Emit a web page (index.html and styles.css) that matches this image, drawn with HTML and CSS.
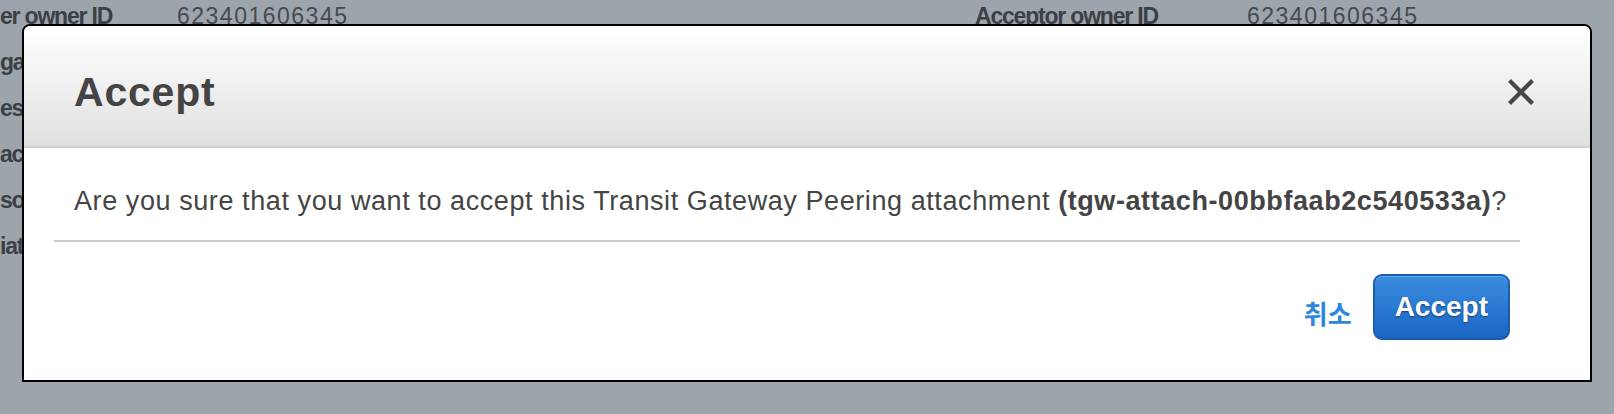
FILE: index.html
```html
<!DOCTYPE html>
<html lang="en">
<head>
<meta charset="utf-8">
<title>Accept</title>
<link rel="stylesheet" href="styles.css">
</head>
<body>
<div class="details">
  <div class="col col-left">
    <div class="row"><span class="label">er owner ID</span><span class="value">623401606345</span></div>
    <div class="row"><span class="label">gateway ID</span></div>
    <div class="row"><span class="label">est</span></div>
    <div class="row"><span class="label">ac</span></div>
    <div class="row"><span class="label">so</span></div>
    <div class="row"><span class="label">iat</span></div>
  </div>
  <div class="col col-right">
    <div class="row"><span class="label label-right">Acceptor owner ID</span><span class="value">623401606345</span></div>
  </div>
</div>

<div class="overlay">
  <div class="modal" role="dialog" aria-labelledby="modal-title">
    <div class="modal-header">
      <h2 class="modal-title" id="modal-title">Accept</h2>
      <button class="close-btn" type="button" aria-label="Close">
        <svg width="28" height="28" viewBox="0 0 28 28" aria-hidden="true">
          <path d="M2.5 2.5 L25.5 25.5 M25.5 2.5 L2.5 25.5" stroke="#474747" stroke-width="4.2" stroke-linecap="butt" fill="none"/>
        </svg>
      </button>
    </div>
    <div class="modal-body">
      <p class="message">Are you sure that you want to accept this Transit Gateway Peering attachment <strong>(tgw-attach-00bbfaab2c540533a)</strong>?</p>
    </div>
    <div class="modal-footer">
      <a class="cancel-link" href="#">취소</a>
      <button class="primary-btn" type="button">Accept</button>
    </div>
  </div>
</div>
</body>
</html>
```

FILE: styles.css
```css
* {
  box-sizing: border-box;
}

html, body {
  margin: 0;
  padding: 0;
}

body {
  width: 1614px;
  height: 414px;
  overflow: hidden;
  background: #9ea4ab;
  font-family: "Liberation Sans", Arial, "Noto Sans CJK KR", sans-serif;
}

/* background details panel (dimmed) */
.details {
  display: flex;
  margin-top: -7px;
}

.col {
  display: flex;
  flex-direction: column;
}

.col-left {
  width: 975px;
}

.row {
  display: flex;
  height: 46px;
  line-height: 46px;
  font-size: 23px;
  white-space: nowrap;
}

.label {
  font-weight: 700;
  color: #3b4047;
  letter-spacing: -1.2px;
  width: 177px;
}

.label-right {
  width: 272px;
}

.value {
  color: #454a51;
  letter-spacing: 1.5px;
}

/* overlay & modal */
.overlay {
  position: fixed;
  inset: 0;
}

.modal {
  position: absolute;
  left: 22px;
  top: 24px;
  width: 1570px;
  background: #fff;
  border: 2px solid #000;
  border-radius: 8px 8px 0 0;
  overflow: hidden;
}

.modal-header {
  height: 122px;
  padding: 11px 55px 0 50px;
  display: flex;
  align-items: center;
  justify-content: space-between;
  background: linear-gradient(#ffffff, #e0e0e0);
  border-bottom: 2px solid #cfcfcf;
}

.modal-title {
  margin: 0;
  font-size: 41px;
  line-height: 40px;
  font-weight: 700;
  letter-spacing: 0.8px;
  color: #444;
}

.close-btn {
  display: flex;
  padding: 0;
  border: 0;
  background: none;
  cursor: pointer;
}

.modal-body {
  margin: 0 70px 0 30px;
  padding: 34px 20px 20px;
  border-bottom: 2px solid #cccccc;
}

.message {
  margin: 0;
  font-size: 27px;
  line-height: 38px;
  letter-spacing: 0.58px;
  color: #444;
  white-space: nowrap;
}

.message strong {
  font-weight: 700;
}

.modal-footer {
  display: flex;
  justify-content: flex-end;
  align-items: center;
  gap: 21px;
  padding: 32px 80px 40px 0;
}

.cancel-link {
  padding-top: 12px;
  font-family: "Noto Sans CJK KR", sans-serif;
  font-weight: 700;
  font-size: 26px;
  line-height: 38px;
  color: #2f87dc;
  text-decoration: none;
}

.primary-btn {
  height: 66px;
  padding: 0 20px;
  border: 2px solid #1c5dac;
  border-radius: 9px;
  background: linear-gradient(#3a8de0, #1c65c3);
  box-shadow: inset 0 1px 0 rgba(255, 255, 255, 0.25);
  color: #fff;
  font-family: "Liberation Sans", Arial, sans-serif;
  font-size: 28px;
  line-height: 62px;
  font-weight: 700;
  text-shadow: 0 1px 2px rgba(0, 0, 0, 0.45);
  cursor: pointer;
}
```
